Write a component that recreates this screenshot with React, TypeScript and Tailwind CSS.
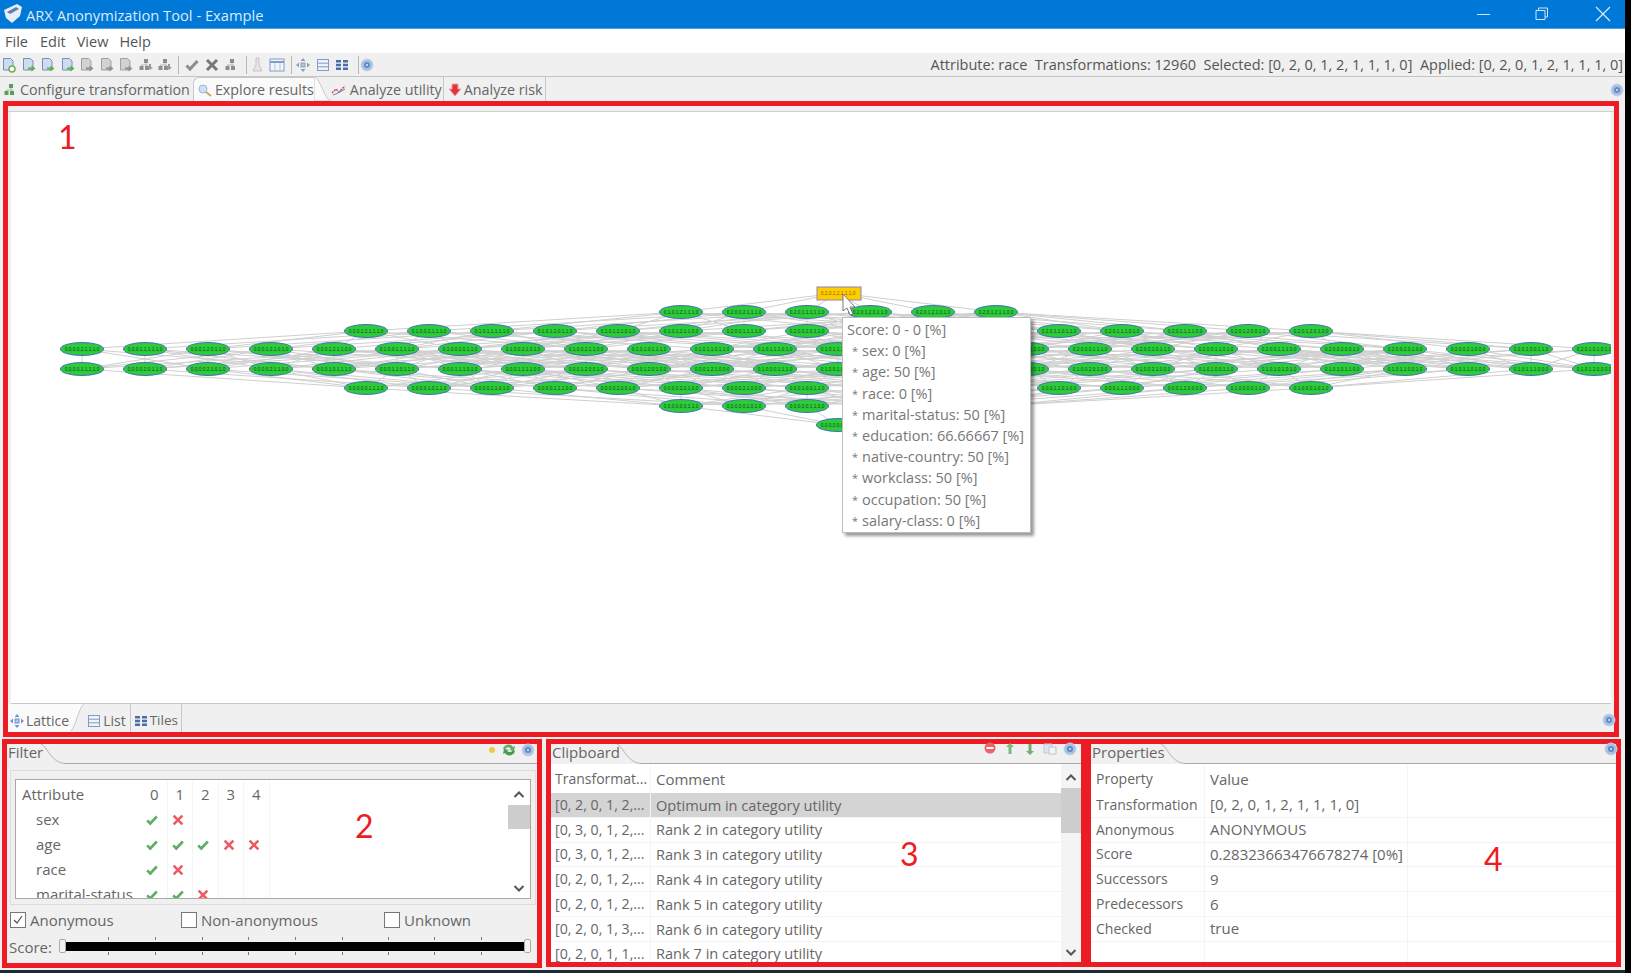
import type { ReactNode } from 'react';

const RED = 'border-[#ed1c24]';

type Node = { x: number; y: number; label: string };

// Lattice levels, built by lowering digits of the selected transformation
const top = [0, 2, 0, 1, 2, 1, 1, 1, 0];

const buildLevels = () => {
  const levels: number[][][] = [[top]];
  for (let l = 0; l < 8; l++) {
    const seen = new Set<string>();
    const next: number[][] = [];
    levels[l].forEach((v) => {
      v.forEach((d, i) => {
        if (d === 0) return;
        const c = [...v];
        c[i] = d - 1;
        if (!seen.has(c.join())) {
          seen.add(c.join());
          next.push(c);
        }
      });
    });
    levels.push(next);
  }
  return levels;
};

const rows = [
  { y: 293, start: 838, count: 1, level: 0 },
  { y: 312, start: 681, count: 6, level: 1 },
  { y: 331, start: 366, count: 16, level: 2 },
  { y: 349, start: 82, count: 25, level: 3 },
  { y: 369, start: 82, count: 25, level: 4 },
  { y: 388, start: 366, count: 16, level: 5 },
  { y: 406, start: 681, count: 6, level: 6 },
  { y: 425, start: 838, count: 1, level: 8 },
];

const levels = buildLevels();

const lattice: Node[][] = rows.map((r) =>
  Array.from({ length: r.count }, (_, i) => {
    const lv = levels[r.level];
    return { x: r.start + i * 63, y: r.y, label: lv[i % lv.length].join(',') };
  })
);

const edges: { a: Node; b: Node }[] = [];
lattice.forEach((row, r) => {
  const next = lattice[r + 1];
  if (!next) return;
  row.forEach((a, i) => {
    next.forEach((b, j) => {
      const dx = Math.abs(a.x - b.x);
      const isEnd = (i === 0 && j === 0) || (i === row.length - 1 && j === next.length - 1);
      const hash = (i * 37 + j * 53 + r * 11 + i * j * 7) % 100;
      if (isEnd || (dx < 330 && hash < 60)) edges.push({ a, b });
    });
  });
});

// nodes fully behind the tooltip are not drawn
const hiddenByTooltip = (n: Node) => n.y >= 330 && n.y <= 520 && n.x >= 866 && n.x <= 1008;

const LatticeGraph = () => (
  <svg viewBox="11 112 1600 592" className="block h-[592px] w-[1600px]">
    <g stroke="#cfcfcf" strokeWidth="1">
      {edges.map((e, i) => (
        <line key={i} x1={e.a.x} y1={e.a.y} x2={e.b.x} y2={e.b.y} />
      ))}
    </g>
    {lattice.map((row, r) =>
      row.filter((n) => !hiddenByTooltip(n)).map((n) =>
        r === 0 ? (
          <g key={n.x + '-' + n.y}>
            <rect x={817} y={287} width={44} height={13} fill="#ffcc00" stroke="#8b84b8" strokeWidth="1" />
            <text x={n.x} y={n.y + 2} textAnchor="middle" fontSize="4.8" fill="#8a5a00" fontFamily="Liberation Sans, sans-serif">
              {n.label}
            </text>
          </g>
        ) : (
          <g key={n.x + '-' + n.y}>
            <ellipse cx={n.x} cy={n.y} rx={21.5} ry={6.5} fill="#2ecb3a" stroke="#3f6fb8" strokeWidth="1" />
            <text x={n.x} y={n.y + 1.8} textAnchor="middle" fontSize="4.8" fill="#0c4f16" fontFamily="Liberation Sans, sans-serif">
              {n.label}
            </text>
          </g>
        )
      )
    )}
  </svg>
);

const tooltipLines = [
  'sex: 0 [%]',
  'age: 50 [%]',
  'race: 0 [%]',
  'marital-status: 50 [%]',
  'education: 66.66667 [%]',
  'native-country: 50 [%]',
  'workclass: 50 [%]',
  'occupation: 50 [%]',
  'salary-class: 0 [%]',
];

// Small icons
const DocIcon = ({ gray, plus }: { gray?: boolean; plus?: boolean }) => (
  <svg width="16" height="16" viewBox="0 0 16 16">
    <path
      d="M2.5 1.5h7l2.5 2.5v9h-9.5z"
      fill={gray ? '#d2d2d2' : '#cfdcf0'}
      stroke={gray ? '#a0a0a0' : '#6f90c0'}
    />
    {plus ? (
      <circle cx="11" cy="12" r="3" fill="#fff" stroke="#6fb04f" strokeWidth="1.5" />
    ) : (
      <path d="M7 10.5h3.5V8.5l4 3-4 3v-2H7z" fill={gray ? '#8f8f8f' : '#5db04c'} />
    )}
  </svg>
);

const TreeIcon = ({ color = '#8c8c8c', arrow }: { color?: string; arrow?: boolean }) => (
  <svg width="16" height="16" viewBox="0 0 16 16">
    <rect x="6" y="2" width="4" height="4" fill={color} />
    <rect x="1.5" y="9" width="4" height="4" fill={color} />
    <rect x="7" y="9" width="4" height="4" fill={color} />
    <path d="M8 6v2M3.5 9V8h6v1" stroke="#b5b5b5" fill="none" />
    {arrow && <path d="M11 7h2v3h2l-3 3-3-3h2z" fill="#9a9a9a" />}
  </svg>
);

const CheckIcon = ({ color = '#5fae63', size = 16 }: { color?: string; size?: number }) => (
  <svg width={size} height={size} viewBox="0 0 16 16">
    <path d="M2.5 8.5 6 12l7.5-8" fill="none" stroke={color} strokeWidth="3" />
  </svg>
);

const CrossIcon = ({ color = '#ee5a63', size = 16 }: { color?: string; size?: number }) => (
  <svg width={size} height={size} viewBox="0 0 16 16">
    <path d="M3 3l10 10M13 3 3 13" fill="none" stroke={color} strokeWidth="3" />
  </svg>
);

const MoveIcon = ({ color = '#8c9db5' }: { color?: string }) => (
  <svg width="16" height="16" viewBox="0 0 16 16">
    <path d="M8 1l2.5 3h-5zM8 15l-2.5-3h5zM1 8l3-2.5v5zM15 8l-3 2.5v-5z" fill={color} />
    <rect x="6" y="6" width="4" height="4" fill="#b8c6da" stroke={color} />
  </svg>
);

const ListIcon = () => (
  <svg width="14" height="14" viewBox="0 0 14 14">
    <rect x="1.5" y="1.5" width="11" height="11" fill="#eef3fa" stroke="#7f9cc6" />
    <path d="M1.5 5.2h11M1.5 8.8h11" stroke="#7f9cc6" />
  </svg>
);

const TilesIcon = () => (
  <svg width="14" height="14" viewBox="0 0 14 14">
    <path d="M1 2h5v2.5H1zM8 2h5v2.5H8zM1 5.8h5v2.5H1zM8 5.8h5v2.5H8zM1 9.6h5v2.5H1zM8 9.6h5v2.5H8z" fill="#4a6fa8" />
  </svg>
);

const HelpIcon = () => (
  <svg width="14" height="14" viewBox="0 0 14 14">
    <circle cx="7" cy="7" r="6" fill="#a9c1e2" stroke="#c3d3ea" />
    <circle cx="7" cy="7" r="3" fill="#6189c6" />
    <circle cx="7" cy="7" r="1" fill="#dfe8f5" />
  </svg>
);

const Sep = ({ className = 'mr-[2px] ml-[6px]' }: { className?: string }) => (
  <div className={`h-[18px] w-px bg-[#b8b8b8] ${className}`} />
);

const BigNumber = ({ className, children }: { className: string; children: ReactNode }) => (
  <div className={`absolute font-['Lato',sans-serif] text-[32px] leading-none text-[#ed1c24] ${className}`}>{children}</div>
);

const PanelHeader = ({ title, icons, titleW }: { title: string; icons?: ReactNode; titleW: string }) => (
  <div className="flex h-[20px] shrink-0 items-stretch">
    <div className={`flex items-center pb-[3px] pl-px text-[15px] leading-none text-[#666] ${titleW}`}>{title}</div>
    <svg width="24" height="20" viewBox="0 0 24 20" className="shrink-0">
      <path d="M0 0C6 2 10 19 24 19.5" fill="none" stroke="#b5b5b5" />
    </svg>
    <div className="flex flex-1 items-start justify-end border-b border-[#a8a8a8]">{icons}</div>
  </div>
);

const ScrollBar = ({ className, thumb }: { className: string; thumb: string }) => (
  <div className={`flex flex-col items-center ${className}`}>
    <svg width="14" height="14" viewBox="0 0 14 14" className="mt-[7px] shrink-0">
      <path d="M2.5 9 7 4.5 11.500 9" fill="none" stroke="#555" strokeWidth="2" />
    </svg>
    <div className={`w-full bg-[#cdcdcd] ${thumb}`} />
    <svg width="14" height="14" viewBox="0 0 14 14" className="mt-auto mb-[3px] shrink-0">
      <path d="M2.500 5 7 9.500 11.500 5" fill="none" stroke="#555" strokeWidth="2" />
    </svg>
  </div>
);

const filterRows: { name: string; marks: boolean[] }[] = [
  { name: 'sex', marks: [true, false] },
  { name: 'age', marks: [true, true, true, false, false] },
  { name: 'race', marks: [true, false] },
  { name: 'marital-status', marks: [true, true, false] },
];

const clipboard = [
  ['[0, 2, 0, 1, 2,...', 'Optimum in category utility'],
  ['[0, 3, 0, 1, 2,...', 'Rank 2 in category utility'],
  ['[0, 3, 0, 1, 2,...', 'Rank 3 in category utility'],
  ['[0, 2, 0, 1, 2,...', 'Rank 4 in category utility'],
  ['[0, 2, 0, 1, 2,...', 'Rank 5 in category utility'],
  ['[0, 2, 0, 1, 3,...', 'Rank 6 in category utility'],
  ['[0, 2, 0, 1, 1,...', 'Rank 7 in category utility'],
];

const properties = [
  ['Property', 'Value'],
  ['Transformation', '[0, 2, 0, 1, 2, 1, 1, 1, 0]'],
  ['Anonymous', 'ANONYMOUS'],
  ['Score', '0.28323663476678274 [0%]'],
  ['Successors', '9'],
  ['Predecessors', '6'],
  ['Checked', 'true'],
  ['', ''],
];

const ticks = [108, 155, 202, 248, 295, 342, 388, 434, 481];

export default function App() {
  return (
    <div className="flex h-[973px] w-[1631px] overflow-hidden bg-black font-['Open_Sans',sans-serif] text-[#666]">
      <div className="flex w-[1625px] flex-col bg-[#f0f0f0]">
        {/* Title bar */}
        <div className="flex h-[29px] shrink-0 items-center border-b border-[#4da0e4] bg-[#0078d7] text-white">
          <svg width="22" height="22" viewBox="0 0 22 22" className="ml-[2px] shrink-0">
            <path d="M2 7 15 1l5 3-2 9-8 7-6-5z" fill="#e8eef8" />
            <path d="M5 9l9-5 3 2-9 5z" fill="#5b7fb8" />
          </svg>
          <span className="ml-[2px] pt-[2px] text-[14.7px] leading-none text-[#dcebfa]">ARX Anonymization Tool - Example</span>
          <div className="ml-auto flex items-center">
            <div className="h-px w-[13px] bg-[#cfe4f7]" />
            <svg width="14" height="14" viewBox="0 0 14 14" className="ml-[45px]">
              <path d="M3.500 3.500V1h9v9H10M1 3.500h9v9H1z" fill="none" stroke="#cfe4f7" />
            </svg>
            <svg width="16" height="16" viewBox="0 0 16 16" className="mr-[14px] ml-[46px]">
              <path d="M1 1l14 14M15 1 1 15" stroke="#dcebfa" strokeWidth="1.2" />
            </svg>
          </div>
        </div>

        {/* Menu */}
        <div className="flex h-[24px] shrink-0 items-center bg-white pt-[2px] pl-[5px] text-[14.5px] leading-none text-[#555]">
          <span>File</span>
          <span className="ml-[12px]">Edit</span>
          <span className="ml-[11px]">View</span>
          <span className="ml-[11px]">Help</span>
        </div>

        {/* Toolbar */}
        <div className="flex h-[24px] shrink-0 items-center border-b border-[#c4c4c4] pl-px">
          <div className="flex items-center gap-[3.500px]">
            <DocIcon plus />
            <DocIcon />
            <DocIcon />
            <DocIcon />
            <DocIcon gray />
            <DocIcon gray />
            <DocIcon gray />
            <TreeIcon arrow />
            <TreeIcon arrow />
          </div>
          <Sep className="mx-[5px]" />
          <div className="flex items-center gap-[4px]">
            <CheckIcon color="#8c8c8c" />
            <CrossIcon color="#777" />
            <TreeIcon />
          </div>
          <Sep />
          <div className="flex items-center gap-[4px]">
            <svg width="16" height="16" viewBox="0 0 16 16">
              <path d="M7 1h3v7l3 6H4l3-6z" fill="#e6e6e6" stroke="#c4c4c4" />
            </svg>
            <svg width="16" height="16" viewBox="0 0 16 16">
              <rect x="1" y="2" width="14" height="12" fill="#f2f5fa" stroke="#7f9cc6" />
              <path d="M1 5h14" stroke="#7f9cc6" strokeWidth="2" />
              <path d="M6 6v8M11 6v8" stroke="#b5c6df" />
            </svg>
          </div>
          <Sep className="mr-[3px] ml-[6px]" />
          <div className="flex items-center gap-[5px]">
            <MoveIcon />
            <ListIcon />
            <TilesIcon />
          </div>
          <Sep className="mr-px ml-[9px]" />
          <div>
            <HelpIcon />
          </div>
          <div className="ml-auto pt-[2px] pr-[2px] text-[14.5px] leading-none whitespace-pre text-[#555]">
            {'Attribute: race  Transformations: 12960  Selected: [0, 2, 0, 1, 2, 1, 1, 1, 0]  Applied: [0, 2, 0, 1, 2, 1, 1, 1, 0]'}
          </div>
        </div>

        {/* Perspective tabs */}
        <div className="flex h-[24px] shrink-0 items-end text-[14.3px] leading-none text-[#666]">
          <div className="flex h-full items-center pt-[2px] pl-[3px]">
            <TreeIcon color="#5b9e5b" />
            <span className="ml-px">Configure transformation</span>
          </div>
          <div className="ml-[3px] flex h-full items-center rounded-tl-md border-t border-l border-[#c8c8c8] bg-[#fafafa] pt-[2px] pl-[3px]">
            <svg width="16" height="16" viewBox="0 0 16 16">
              <circle cx="6" cy="6" r="4" fill="#cfe0f5" stroke="#9bb7dc" />
              <path d="M9 9l5 4" stroke="#d2a860" strokeWidth="2" />
            </svg>
            <span className="ml-[2px]">Explore results</span>
          </div>
          <svg width="17" height="24" viewBox="0 0 17 24" className="shrink-0">
            <path d="M0 0h1C7 3 10 22 17 24H0z" fill="#fafafa" stroke="#c8c8c8" />
          </svg>
          <div className="flex h-full items-center border-r border-[#c8c8c8] pt-[2px] pr-px">
            <svg width="16" height="14" viewBox="0 0 16 14">
              <path d="M1 10 5 6l3 3 6-6" fill="none" stroke="#d6455b" strokeWidth="1.500" strokeDasharray="2 1" />
              <path d="M2 12l5-2 7-4" fill="none" stroke="#5b7fc0" strokeWidth="1" />
            </svg>
            <span className="ml-[3px]">Analyze utility</span>
          </div>
          <div className="flex h-full items-center border-r border-[#c8c8c8] pt-[2px] pr-[2px] pl-[4px]">
            <svg width="14" height="16" viewBox="0 0 14 16">
              <path d="M4 2h6v5h3l-6 7-6-7h3z" fill="#e2343f" stroke="#f2a3a8" />
            </svg>
            <span className="ml-[2px]">Analyze risk</span>
          </div>
          <div className="mr-[1px] mb-[4px] ml-auto">
            <HelpIcon />
          </div>
        </div>

        {/* 1: lattice view */}
        <div className={`relative ml-[3px] flex h-[636px] w-[1616px] shrink-0 flex-col border-[5px] ${RED}`}>
          <div className="h-[6px] shrink-0 border-b border-[#cfcfcf]" />
          <div className="relative mx-[3px] h-[592px] shrink-0 overflow-hidden border-b border-[#c8c8c8] bg-white">
            <LatticeGraph />
          </div>
          <div className="flex flex-1 items-stretch text-[14px] leading-none text-[#666]">
            <div className="flex items-center bg-[#fafafa] pt-[5px] pl-[1px]">
              <MoveIcon color="#6f95d0" />
              <span className="ml-[1px] pr-[1px]">Lattice</span>
            </div>
            <svg width="14" height="27" viewBox="0 0 14 27" className="shrink-0">
              <path d="M0 27h1C6 22 9 3 14 1V0H0z" fill="#fafafa" />
              <path d="M1 27C6 22 9 3 14 0" fill="none" stroke="#c8c8c8" />
            </svg>
            <div className="flex items-center border-r border-[#c8c8c8] pt-[5px] pr-[4px] pl-[3px]">
              <ListIcon />
              <span className="ml-[2px]">List</span>
            </div>
            <div className="flex items-center border-r border-[#c8c8c8] pt-[5px] pr-[3px] pl-[3px]">
              <TilesIcon />
              <span className="ml-[2px] text-[13.5px]">Tiles</span>
            </div>
            <div className="-mr-[2px] ml-auto flex items-center pt-[3px]">
              <HelpIcon />
            </div>
          </div>
          <BigNumber className="top-[15px] left-[50px]">1</BigNumber>

          {/* Tooltip over the hovered node */}
          <div className="absolute top-[211px] left-[834px] h-[216px] w-[189px] border border-[#bdbdbd] bg-white pt-px pl-[4px] text-[14.5px] leading-[21.2px] text-[#777] shadow-[3px_3px_3px_rgba(0,0,0,0.4)]">
            <div>Score: 0 - 0 [%]</div>
            {tooltipLines.map((l) => (
              <div key={l} className="flex pl-[5px]">
                <span className="w-[10px] text-[11px]">*</span>
                <span>{l}</span>
              </div>
            ))}
          </div>
          <svg width="16" height="26" viewBox="0 0 16 26" className="absolute top-[187px] left-[834px]">
            <path d="M1 1v17l4-3 3 7 3-1-3-7h5z" fill="#fff" stroke="#777" />
          </svg>
        </div>

        {/* Bottom panels */}
        <div className="mt-[2px] flex h-[229px] shrink-0 items-start">
          {/* 2: filter */}
          <div className={`relative ml-[2px] flex h-[229px] w-[540px] shrink-0 flex-col border-[5px] ${RED}`}>
            <PanelHeader
              title="Filter"
              titleW="w-[34px]"
              icons={
                <div className="-mt-px flex items-center">
                  <div className="h-[6px] w-[6px] rounded-full bg-[#f2c84b]" />
                  <svg width="16" height="14" viewBox="0 0 16 14" className="ml-[6px]">
                    <path d="M2 6C3 1 10 0 12 4l2-1-1 5-5-1 2-1C8 3 5 4 4 7z" fill="#5fae63" />
                    <path d="M14 8c-1 5-8 6-10 2l-2 1 1-5 5 1-2 1c2 2 5 1 6-1z" fill="#4c9a50" />
                  </svg>
                  <div className="mr-[2px] ml-[4px]">
                    <HelpIcon />
                  </div>
                </div>
              }
            />
            <div className="mt-[6px] mr-px ml-[3px] h-[135px] shrink-0 border border-[#dcdcdc] px-[4px] pt-[8px]">
              <div className="flex h-[120px] overflow-hidden border border-[#a8a8a8] bg-white pt-px text-[15px] leading-none text-[#666]">
                <div className="flex-1">
                  {[{ name: 'Attribute', marks: [] as boolean[] }, ...filterRows].map((row, r) => (
                    <div key={row.name} className={`flex items-stretch ${r === 0 ? 'h-[26px]' : 'h-[25px]'}`}>
                      <div className={`flex w-[126px] items-center ${r === 0 ? 'pl-[6px]' : 'pl-[20px]'}`}>{row.name}</div>
                      {[0, 1, 2, 3, 4].map((c) => (
                        <div key={c} className="flex w-[25.500px] items-center justify-center border-r border-[#f4f4f4]">
                          {r === 0 ? (
                            c
                          ) : row.marks[c] === undefined ? null : (
                            <span className="pr-[4px]">{row.marks[c] ? <CheckIcon size={14} /> : <CrossIcon size={14} />}</span>
                          )}
                        </div>
                      ))}
                    </div>
                  ))}
                </div>
                <ScrollBar className="w-[22px]" thumb="mt-[3px] h-[24px]" />
              </div>
            </div>
            <div className="mt-[7px] flex h-[16px] shrink-0 items-center text-[15px] leading-none text-[#666]">
              <div className="ml-[3px] flex w-[171px] items-center">
                <div className="flex h-[16px] w-[16px] items-center justify-center border border-[#777] bg-white">
                  <svg width="12" height="12" viewBox="0 0 12 12">
                    <path d="M2 6l3 3 5-7" fill="none" stroke="#555" strokeWidth="1.200" />
                  </svg>
                </div>
                <span className="ml-[4px]">Anonymous</span>
              </div>
              <div className="flex w-[203px] items-center">
                <div className="h-[16px] w-[16px] border border-[#777] bg-white" />
                <span className="ml-[4px]">Non-anonymous</span>
              </div>
              <div className="flex items-center">
                <div className="h-[16px] w-[16px] border border-[#777] bg-white" />
                <span className="ml-[4px]">Unknown</span>
              </div>
            </div>
            <div className="relative mt-[9px] flex h-[18px] shrink-0 items-center text-[15px] leading-none text-[#666]">
              <span className="ml-[2px] w-[50px] pt-[2px]">Score:</span>
              <div className="h-[14px] w-[7px] rounded-[2px] border border-[#aaa] bg-[#f2f2f2]" />
              <div className="h-[9px] w-[458px] bg-black" />
              <div className="h-[14px] w-[7px] rounded-[2px] border border-[#aaa] bg-[#f2f2f2]" />
              {ticks.map((t) => (
                <div key={t} className="absolute top-0 flex h-[18px] flex-col justify-between" style={{ left: t - 7 }}>
                  <div className="h-[3px] w-px bg-[#777]" />
                  <div className="h-[3px] w-px bg-[#777]" />
                </div>
              ))}
            </div>
            <BigNumber className="top-[66px] left-[348px]">2</BigNumber>
          </div>

          {/* 3: clipboard */}
          <div className={`relative ml-[4px] flex h-[228px] w-[540px] shrink-0 flex-col border-[5px] ${RED}`}>
            <PanelHeader
              title="Clipboard"
              titleW="w-[66px]"
              icons={
                <div className="-mt-[2px] mr-[4px] flex items-center gap-[6px]">
                  <svg width="14" height="14" viewBox="0 0 14 14">
                    <circle cx="7" cy="6" r="5.500" fill="#e8636a" />
                    <rect x="3.500" y="5" width="7" height="2" fill="#fff" />
                  </svg>
                  <svg width="14" height="14" viewBox="0 0 14 14">
                    <path d="M7 1l4 4H8.500v7h-3V5H3z" fill="#7fb87f" />
                  </svg>
                  <svg width="14" height="14" viewBox="0 0 14 14">
                    <path d="M7 13 3 9h2.500V2h3v7H11z" fill="#6fb06f" />
                  </svg>
                  <svg width="14" height="14" viewBox="0 0 14 14">
                    <path d="M1 2h8v9H1z" fill="#dbe6f4" stroke="#b9c9e0" />
                    <path d="M6 5h7v7H6z" fill="#f4f4f4" stroke="#c4c4c4" />
                  </svg>
                  <HelpIcon />
                </div>
              }
            />
            <div className="flex h-[198px] overflow-hidden bg-white text-[15px] leading-none text-[#666]">
              <div className="flex-1 pt-px">
                <div className="flex h-[28px]">
                  <div className="flex w-[100px] items-center border-r border-[#f4f4f4] pl-[4px] text-[14px]">Transformat...</div>
                  <div className="flex items-center pl-[5px]">Comment</div>
                </div>
                {clipboard.map((c, i) => (
                  <div key={c[1]} className={`flex h-[24.800px] border-b border-[#f4f4f4] ${i === 0 ? 'bg-[#d4d4d4]' : ''}`}>
                    <div className="flex w-[100px] items-center border-r border-[#f4f4f4] pl-[4px] text-[14.200px]">{c[0]}</div>
                    <div className="flex items-center pl-[5px] text-[14.600px]">{c[1]}</div>
                  </div>
                ))}
              </div>
              <ScrollBar className="w-[20px] bg-[#f4f4f4]" thumb="mt-[3px] h-[45px]" />
            </div>
            <BigNumber className="top-[94px] left-[349px]">3</BigNumber>
          </div>

          {/* 4: properties */}
          <div className={`relative flex h-[228px] w-[535px] shrink-0 flex-col border-[5px] ${RED}`}>
            <PanelHeader
              title="Properties"
              titleW="w-[70px]"
              icons={
                <div className="-mt-[2px] -mr-[2px]">
                  <HelpIcon />
                </div>
              }
            />
            <div className="h-[198px] overflow-hidden bg-white pt-px text-[15px] leading-none text-[#666]">
              {properties.map((p, i) => (
                <div key={p[0]} className={`flex ${i === 0 ? 'h-[28px]' : i === 7 ? 'h-[30px]' : 'h-[24.800px] border-b border-[#f4f4f4]'}`}>
                  <div className="flex w-[114px] items-center border-r border-[#f4f4f4] pl-[5px] text-[14px]">{p[0]}</div>
                  <div className="flex w-[203px] items-center border-r border-[#f4f4f4] pl-[5px] whitespace-nowrap">{p[1]}</div>
                </div>
              ))}
            </div>
            <BigNumber className="top-[99px] left-[393px]">4</BigNumber>
          </div>
        </div>

        <div className="mt-auto h-[3px] shrink-0 bg-[#1c2b36]" />
      </div>
    </div>
  );
}
